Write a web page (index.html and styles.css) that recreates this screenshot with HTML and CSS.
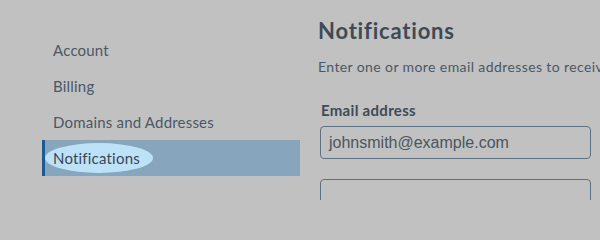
FILE: index.html
```html
<!DOCTYPE html>
<html>
<head>
<meta charset="utf-8">
<link rel="stylesheet" href="styles.css">
</head>
<body>
<div class="page">
  <nav class="sidebar">
    <a class="nav-item">Account</a>
    <a class="nav-item">Billing</a>
    <a class="nav-item">Domains and Addresses</a>
    <a class="nav-item active"><span class="hl">Notifications</span></a>
  </nav>
  <main class="content">
    <h1 class="title">Notifications</h1>
    <p class="intro">Enter one or more email addresses to receive notifications.</p>
    <label class="label">Email address</label>
    <div class="input">johnsmith@example.com</div>
    <div class="input"></div>
  </main>
</div>
</body>
</html>
```
FILE: styles.css
```css
html, body {
  margin: 0;
  padding: 0;
  background: #c1c1c1;
}
.page {
  display: flex;
  width: 600px;
  height: 200px;
  overflow: hidden;
  font-family: Lato, "Noto Sans", sans-serif;
  color: #4a5866;
}
.sidebar {
  width: 258px;
  margin-left: 42px;
  padding-top: 32px;
  display: flex;
  flex-direction: column;
  flex-shrink: 0;
}
.nav-item {
  display: flex;
  align-items: center;
  height: 36px;
  padding-left: 11px;
  font-size: 15px;
  letter-spacing: 0.2px;
  color: #4b5866;
}
.nav-item.active {
  background: #87a6bd;
  border-left: 3px solid #1d5a8e;
  padding-left: 0;
  color: #3a4652;
}
.hl {
  display: inline-block;
  background: #bde2f8;
  border-radius: 50%;
  padding: 6px 13px 6px 8px;
}
.content {
  padding-left: 18px;
  flex: 1;
  min-width: 0;
  overflow: hidden;
  white-space: nowrap;
}
.title {
  margin: 18px 0 0;
  font-size: 22px;
  font-weight: 700;
  letter-spacing: 0.8px;
  color: #3e4a56;
  line-height: 26px;
}
.intro {
  margin: 14px 0 0;
  font-size: 14px;
  letter-spacing: 0.4px;
  color: #4a5866;
}
.label {
  display: block;
  margin: 26px 0 0 3px;
  font-size: 15px;
  font-weight: 700;
  color: #3e4a56;
  letter-spacing: 0.3px;
}
.input {
  margin: 7px 0 0 2px;
  width: 271px;
  height: 33px;
  border: 1px solid #5e7183;
  border-radius: 4px;
  box-sizing: border-box;
  font-family: "Liberation Sans", Arial, sans-serif;
  font-size: 16px;
  color: #4a5560;
  line-height: 31px;
  padding-left: 8px;
}
.input + .input {
  margin-top: 20px;
}
```
